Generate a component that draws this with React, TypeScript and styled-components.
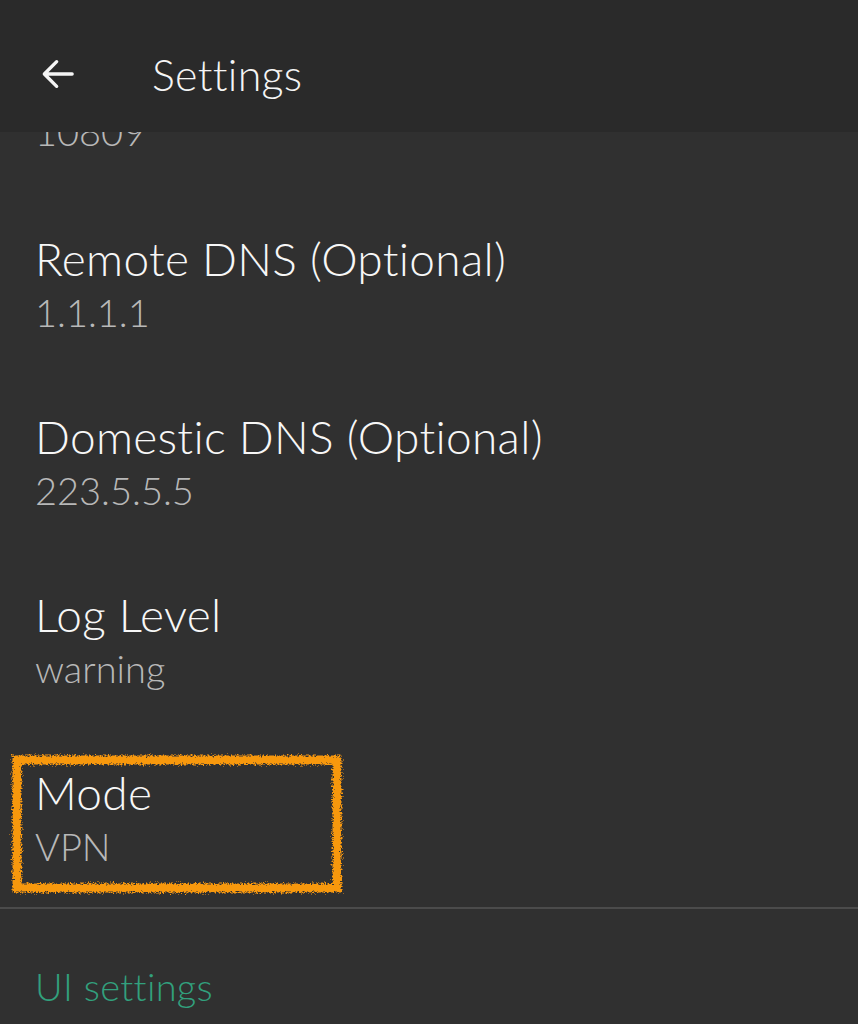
import React from "react";
import styled, { createGlobalStyle } from "styled-components";

const Global = createGlobalStyle`
  html, body { margin: 0; padding: 0; background: #303030; }
  body { font-family: "Lato", "Noto Sans", sans-serif; }
`;

const Page = styled.div`
  width: 858px;
  height: 1024px;
  overflow: hidden;
  background: #303030;
  display: flex;
  flex-direction: column;
`;

const Header = styled.header`
  height: 132px;
  flex: 0 0 132px;
  background: #2a2a2a;
  display: flex;
  align-items: center;
  padding: 16px 0 0 38px;
  gap: 74px;
  box-sizing: border-box;
`;

const Title = styled.h1`
  margin: 0;
  font-weight: 300;
  font-size: 43px;
  color: #f5f5f5;
  letter-spacing: 0.3px;
`;

const BackButton = styled.button`
  background: none;
  border: none;
  padding: 0;
  width: 40px;
  height: 40px;
  display: flex;
  align-items: center;
  justify-content: center;
  color: #f5f5f5;
`;

const List = styled.div`
  display: flex;
  flex-direction: column;
`;

const Row = styled.div<{ $clipped?: boolean }>`
  position: relative;
  padding: ${(p) => (p.$clipped ? "0 35px" : "36px 35px")};
  height: ${(p) => (p.$clipped ? "63px" : "auto")};
  overflow: ${(p) => (p.$clipped ? "hidden" : "visible")};
  box-sizing: border-box;
`;

const RowTitle = styled.div`
  font-size: 46px;
  font-weight: 300;
  line-height: 56px;
  color: #f7f7f7;
  letter-spacing: 0.3px;
`;

const RowValue = styled.div<{ $shift?: number }>`
  font-size: 38px;
  font-weight: 300;
  line-height: 50px;
  color: #b8b8b8;
  margin-top: ${(p) => (p.$shift ? `${p.$shift}px` : "0")};
`;

const Divider = styled.div`
  height: 2px;
  background: #4b4b4b;
`;

const SectionTitle = styled.div`
  padding: 52px 35px 0;
  font-size: 38px;
  font-weight: 300;
  line-height: 50px;
  color: #32a07d;
  letter-spacing: 0.3px;
`;

const Highlight = styled.svg`
  position: absolute;
  left: 8px;
  top: 22px;
  width: 338px;
  height: 146px;
  pointer-events: none;
`;

const rows = [
  { title: "Remote DNS (Optional)", value: "1.1.1.1" },
  { title: "Domestic DNS (Optional)", value: "223.5.5.5" },
  { title: "Log Level", value: "warning" },
  { title: "Mode", value: "VPN", highlight: true },
];

export default function App() {
  return (
    <>
      <Global />
      <Page>
        <Header>
          <BackButton aria-label="Back">
            <svg width="40" height="40" viewBox="0 0 24 24" fill="none">
              <path d="M20.5 12H3.8M11.2 4.6L3.8 12l7.4 7.4" stroke="#f5f5f5" strokeWidth="2" strokeLinecap="round" strokeLinejoin="round" />
            </svg>
          </BackButton>
          <Title>Settings</Title>
        </Header>
        <List>
          <Row $clipped>
            <RowValue $shift={-26}>10809</RowValue>
          </Row>
          {rows.map((r) => (
            <Row key={r.title}>
              <RowTitle>{r.title}</RowTitle>
              <RowValue>{r.value}</RowValue>
              {r.highlight && (
                <Highlight viewBox="0 0 338 146">
                  <defs>
                    <filter id="rough" x="-5%" y="-5%" width="110%" height="110%">
                      <feTurbulence type="fractalNoise" baseFrequency="0.6" numOctaves="3" seed="7" result="n" />
                      <feDisplacementMap in="SourceGraphic" in2="n" scale="7" />
                    </filter>
                  </defs>
                  <rect x="9" y="9" width="320" height="128" fill="none" stroke="#f7980f" strokeWidth="9" filter="url(#rough)" />
                </Highlight>
              )}
            </Row>
          ))}
          <Divider />
          <SectionTitle>UI settings</SectionTitle>
        </List>
      </Page>
    </>
  );
}
